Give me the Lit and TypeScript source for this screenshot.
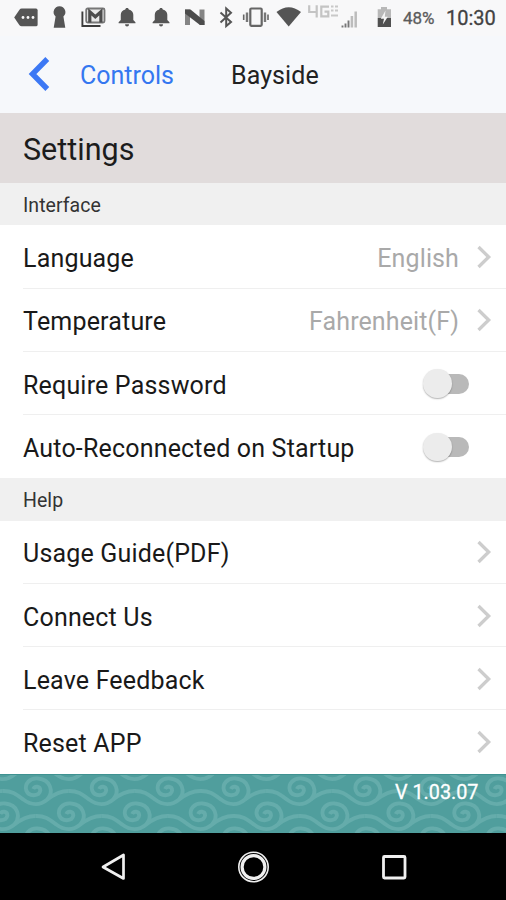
import { LitElement, html, css, svg, nothing } from "lit";
import { customElement, property } from "lit/decorators.js";

interface Item { label: string; value?: string; toggle?: boolean }

const INTERFACE: Item[] = [
  { label: "Language", value: "English" },
  { label: "Temperature", value: "Fahrenheit(F)" },
  { label: "Require Password", toggle: true },
  { label: "Auto-Reconnected on Startup", toggle: true },
];
const HELP: Item[] = [
  { label: "Usage Guide(PDF)" },
  { label: "Connect Us" },
  { label: "Leave Feedback" },
  { label: "Reset APP" },
];

@customElement("status-bar")
class StatusBar extends LitElement {
  static styles = css`
    :host { display: block; height: 36px; position: relative; background: #f8f8f9; }
    svg { display: block; }
    .pct, .time { position: absolute; white-space: nowrap; line-height: 24px; top: 6px; }
    .pct { left: 403px; font-size: 17px; color: #5c5c5c; -webkit-text-stroke: 0.300px #5c5c5c; }
    .time { left: 446px; font-size: 20px; color: #424242; -webkit-text-stroke: 0.300px #424242; }
  `;
  render() {
    const bell = (x: number) => svg`<g transform="translate(${x} 7.700) scale(1.080 1.020)" fill="#555">
      <path d="M8 .2c1 0 1.600.6 1.600 1.600 2.700.7 4.200 2.700 4.200 5.200v5l2 2.300v1H.2v-1L2.200 12V7c0-2.500 1.500-4.500 4.200-5.200C6.400.8 7 .2 8 .2z"/>
      <path d="M6.200 16.300h3.600c0 1.400-.7 2.200-1.800 2.200s-1.800-.8-1.800-2.200z"/></g>`;
    return html`<svg width="506" height="36" viewBox="0 0 506 36">
      <path d="M14.200 17.500L19.500 9.700Q20.300 8.600 21.700 8.600H36Q37.600 8.600 37.600 10.200V24.700Q37.600 26.300 36 26.300H21.700Q20.300 26.300 19.500 25.200Z" fill="#555"/>
      <g fill="#f8f8f9"><circle cx="23" cy="17.500" r="1.400"/><circle cx="28" cy="17.500" r="1.400"/><circle cx="33" cy="17.500" r="1.400"/></g>
      <path d="M59.500 6.300a5.900 5.900 0 0 1 3.900 10.300l1.900 11.100H53.700l1.900-11.100A5.900 5.900 0 0 1 59.500 6.300z" fill="#555"/>
      <path d="M82.400 11.500V26H100.500" fill="none" stroke="#3c3c3c" stroke-width="1.900"/>
      <rect x="86.200" y="8.500" width="18.300" height="14" rx="1.500" fill="#e8e8e8" stroke="#777" stroke-width="1.800"/>
      <path d="M89.800 22.500V11.800L95.300 16.800 100.900 11.800V22.500" fill="none" stroke="#4c4c4c" stroke-width="3.200"/>
      ${bell(118.4)}${bell(152.400)}
      <path d="M185 9.500h5V25h-5zM199.500 9.500h5V25h-5z" fill="#858585"/>
      <path d="M185 9.500h5.500L204.500 21v4H200L185 13.500z" fill="#4c4c4c"/>
      <path d="M220.500 12.500L231 22 226.200 26V8.500L231 12.800 220.500 22.500" fill="none" stroke="#555" stroke-width="2"/>
      <rect x="250.300" y="8.500" width="11.400" height="17.300" rx="1" fill="none" stroke="#666" stroke-width="2.200"/>
      <path d="M247 12.500V22M265 12.500V22" stroke="#777" stroke-width="2.400"/><path d="M243.700 14.500V20M268 14.500V20" stroke="#666" stroke-width="1.600"/>
      <path d="M276.500 12Q288.700 2.500 301 12L288.700 26.500Z" fill="#555"/>
      <g fill="none" stroke="#c4c4c4" stroke-width="2.200"><path d="M309.200 5.300V12H317.500M316.700 5.300V17.500"/><path d="M329 6.600H321.300V16.300H328.300V11.700H324.500"/></g>
      <path d="M331 6.500h2.500M335 6.500h3M331 10.500h2.500M335 10.500h3M331 15.500h7" stroke="#c8c8c8" stroke-width="1.900"/>
      <path d="M342.500 25.500V27.500M345.500 23.500V27.500M348.500 20.500V27.500" stroke="#777" stroke-width="1.900"/>
      <path d="M351.900 16V27.500M355.700 11.500V27.500" stroke="#bcbcbc" stroke-width="2.500"/>
      <path d="M377.700 9.300h3.300V7h6v2.300h4V18h-13.300z" fill="#b8b8b8"/><path d="M377.700 18H391v9h-13.300z" fill="#505050"/>
      <path d="M385.500 10.500L380.800 18.800h3.200L382.800 24.500 387.800 16.800h-3z" fill="#f4f4f4"/>
    </svg><span class="pct">48%</span><span class="time">10:30</span>`;
  }
}

@customElement("setting-row")
class SettingRow extends LitElement {
  @property({ attribute: false }) item!: Item;
  static styles = css`
    :host { display: flex; align-items: center; box-sizing: border-box; height: 63.25px; margin-left: 23px; padding: 4.500px 14.500px 0 0;
      border-bottom: 1.500px solid #efefef; font-size: 25px; letter-spacing: 0.180px; color: #191919; white-space: nowrap; }
    :host(:last-of-type) { border-bottom-color: transparent; }
    .label { flex: 1; }
    .value { color: #a9a9a9; margin-right: 16.500px; letter-spacing: 0.120px; }
    .chev { display: block; margin-top: -3px; }
    .switch { position: relative; width: 46px; height: 30px; margin: -2.500px 22.500px 0 0; }
    .track { position: absolute; right: 0; top: 5px; width: 36px; height: 20px; border-radius: 10px; background: #b9b9b9; }
    .thumb { position: absolute; left: 0; top: 0.500px; width: 28.500px; height: 28.500px; border-radius: 50%; background: #ececec; box-shadow: 0 1px 1.500px rgba(0,0,0,.3); }
  `;
  render() {
    const i = this.item;
    return html`<span class="label">${i.label}</span>
      ${i.value ? html`<span class="value">${i.value}</span>` : nothing}
      ${i.toggle
        ? html`<div class="switch"><div class="track"></div><div class="thumb"></div></div>`
        : html`<svg class="chev" width="16" height="24" viewBox="0 0 16 24"><path d="M2.500 2L12.700 12 2.500 22" fill="none" stroke="#cdcdcd" stroke-width="3.300"/></svg>`}`;
  }
}

const WAVE_PERIOD = 65.9;

@customElement("app-root")
class AppRoot extends LitElement {
  static styles = css`
    :host { display: flex; flex-direction: column; width: 506px; height: 900px; overflow: hidden; background: #fff; font-family: Roboto, "Liberation Sans", sans-serif; }
    .nav { height: 77px; display: flex; align-items: center; box-sizing: border-box; background: #f6f8fb; font-size: 25px; padding: 0 0 0 28px; }
    .nav svg { margin-top: -2px; }
    .back, .title { padding-top: 1.500px; }
    .back { color: #3477f0; margin-left: 30px; width: 151px; }
    .title { color: #222; letter-spacing: 0.100px; }
    .heading { height: 70px; box-sizing: border-box; padding: 3px 0 0 23px; display: flex; align-items: center; background: #e1dcdc; color: #1c1c1c; font-size: 30.500px; }
    .section { height: 42.250px; box-sizing: border-box; padding: 3px 0 0 23px; display: flex; align-items: center; background: #f0f0f0; color: #333; font-size: 19.500px; letter-spacing: 0.050px; }
    .group { display: flex; flex-direction: column; }
    .footer { height: 59.500px; position: relative; background: #509e9d; border-top: 1px solid #3f9291; box-sizing: border-box; overflow: hidden; }
    .footer svg { display: block; }
    .version { position: absolute; right: 27.500px; top: 6px; line-height: 24px; font-size: 19.800px; color: #fff; -webkit-text-stroke: 0.300px #fff; }
    .system { flex: 1; background: #000; }
    .system svg { display: block; }
  `;
  render() {
    return html`
      <status-bar></status-bar>
      <div class="nav">
        <svg width="22" height="34" viewBox="0 0 22 34"><path d="M19.300 2L4.500 17 19.300 32" fill="none" stroke="#3c78f4" stroke-width="5.400"/></svg>
        <span class="back">Controls</span><span class="title">Bayside</span>
      </div>
      <div class="heading">Settings</div>
      <div class="section">Interface</div>
      <div class="group">${INTERFACE.map((i) => html`<setting-row .item=${i}></setting-row>`)}</div>
      <div class="section">Help</div>
      <div class="group">${HELP.map((i) => html`<setting-row .item=${i}></setting-row>`)}</div>
      <div class="footer">
        <svg width="506" height="60" viewBox="0 774.500 506 60">
          <defs>
            <g id="wave" fill="none" stroke="#65acab" stroke-width="3.900">
              <path d="M-2 14.500C8 14 13 18.500 19 23C27 29 36 29 43 23C50 17.500 56 14.500 63.900 14.500"/>
              <path d="M43 23C50 15 46 3 34 2C25 1 20 8 22 14C24.500 20.500 35 20 36 14C36 9.500 30.500 9 29 12.500"/>
            </g>
          </defs>
          ${[-1, 0, 1, 2, 3, 4, 5, 6, 7].map((k) => svg`
            <use href="#wave" x=${k * WAVE_PERIOD + 4.3} y="776"/>
            <use href="#wave" x=${k * WAVE_PERIOD + 37.3} y="801"/>
            <use href="#wave" x=${k * WAVE_PERIOD + 4.3} y="826"/>
            <use href="#wave" x=${k * WAVE_PERIOD + 37.3} y="751"/>`)}
        </svg>
        <span class="version">V 1.03.07</span>
      </div>
      <div class="system">
        <svg width="506" height="67" viewBox="0 833 506 67" fill="none" stroke="#f0f0f0">
          <path d="M103 867L123.500 855V878.500Z" stroke-width="2.700" stroke-linejoin="round"/>
          <circle cx="253.500" cy="867" r="14.700" stroke-width="1.600"/><circle cx="253.500" cy="867" r="11.400" stroke-width="3.200"/>
          <rect x="383.500" y="856.500" width="21.500" height="21.500" rx="1" stroke-width="2.800"/>
        </svg>
      </div>`;
  }
}
